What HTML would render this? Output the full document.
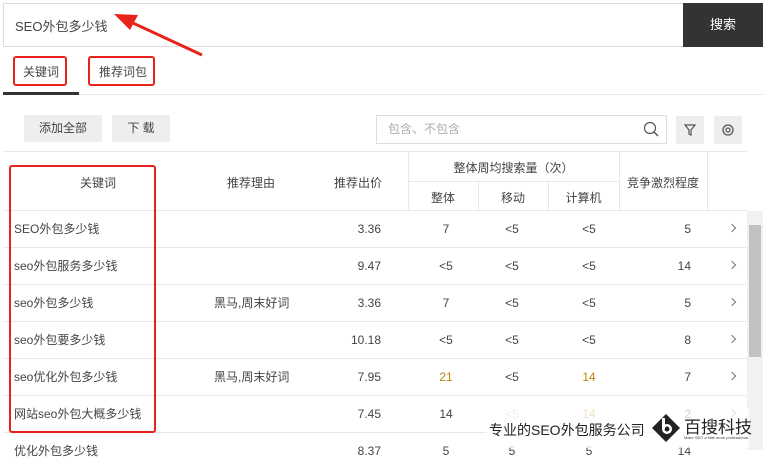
<!DOCTYPE html>
<html><head><meta charset="utf-8"><style>
*{margin:0;padding:0;box-sizing:border-box}
body{width:764px;height:450px;overflow:hidden;background:#fff;font-family:"Liberation Sans","Noto Sans CJK SC",sans-serif;font-size:12px;color:#444;position:relative}
.a{position:absolute}
.red{position:absolute;border:2px solid #e8231b;border-radius:3px}
.btn{position:absolute;background:#eee;text-align:center;line-height:27px;font-size:12px}
.hl{position:absolute;left:3px;width:744px;height:1px;background:#e8e8e8}
.vl{position:absolute;width:1px;background:#e8e8e8}
.row{position:absolute;left:0;width:747px;height:37px;line-height:37px}
.row span{position:absolute;top:0}
.row i{position:absolute;left:729px;top:14px;width:6px;height:6px;border-top:1px solid #777;border-right:1px solid #777;transform:rotate(45deg)}
.c{text-align:center}
.o{color:#b8860b}
</style></head><body>
<div class="a" style="left:3px;top:3px;width:681px;height:44px;border:1px solid #ddd"></div>
<div class="a" style="left:15px;top:16px;font-size:13px">SEO外包多少钱</div>
<div class="a" style="left:683px;top:3px;width:80px;height:44px;background:#333;color:#fff;text-align:center;line-height:44px;font-size:13px">搜索</div>
<svg class="a" style="left:110px;top:10px" width="95" height="50"><line x1="10" y1="7" x2="92" y2="45" stroke="#e8231b" stroke-width="3"/><polygon points="4,4 28,5 20,20" fill="#e8231b"/></svg>
<div class="a" style="left:23px;top:63px;font-size:12px">关键词</div>
<div class="a" style="left:99px;top:63px;font-size:12px">推荐词包</div>
<div class="red" style="left:13px;top:56px;width:54px;height:30px"></div>
<div class="red" style="left:88px;top:56px;width:67px;height:30px"></div>
<div class="a" style="left:3px;top:94px;width:760px;height:1px;background:#e6e6e6"></div>
<div class="a" style="left:3px;top:92px;width:76px;height:3px;background:#333"></div>
<div class="btn" style="left:24px;top:115px;width:78px">添加全部</div>
<div class="btn" style="left:112px;top:115px;width:58px">下 载</div>
<div class="a" style="left:376px;top:115px;width:291px;height:29px;border:1px solid #ddd;color:#aaa;line-height:27px;padding-left:11px">包含、不包含</div>
<svg class="a" style="left:643px;top:121px" width="16" height="16"><circle cx="7" cy="7" r="5.5" fill="none" stroke="#555" stroke-width="1.2"/><line x1="11" y1="11" x2="15" y2="15" stroke="#555" stroke-width="1.4"/></svg>
<div class="a" style="left:676px;top:116px;width:28px;height:28px;background:#eee"></div>
<svg class="a" style="left:684px;top:123px" width="12" height="13"><path d="M1 2H11L7 7V12L5 11V7Z" fill="none" stroke="#555" stroke-width="1.2"/></svg>
<div class="a" style="left:714px;top:116px;width:28px;height:28px;background:#eee"></div>
<svg class="a" style="left:721px;top:123px" width="14" height="14"><circle cx="7" cy="7" r="5" fill="none" stroke="#555" stroke-width="1.3"/><circle cx="7" cy="7" r="2" fill="none" stroke="#555" stroke-width="1.2"/></svg>
<div class="hl" style="top:151px"></div>
<div class="a" style="left:408px;top:181px;width:211px;height:1px;background:#e8e8e8"></div>
<div class="hl" style="top:210px"></div>
<div class="vl" style="left:408px;top:151px;height:60px"></div>
<div class="vl" style="left:478px;top:181px;height:30px"></div>
<div class="vl" style="left:548px;top:181px;height:30px"></div>
<div class="vl" style="left:619px;top:151px;height:60px"></div>
<div class="vl" style="left:707px;top:151px;height:60px"></div>
<div class="a" style="left:80px;top:174px">关键词</div>
<div class="a" style="left:227px;top:174px">推荐理由</div>
<div class="a" style="left:334px;top:174px">推荐出价</div>
<div class="a c" style="left:408px;top:159px;width:211px">整体周均搜索量（次）</div>
<div class="a c" style="left:408px;top:189px;width:70px">整体</div>
<div class="a c" style="left:478px;top:189px;width:70px">移动</div>
<div class="a c" style="left:548px;top:189px;width:71px">计算机</div>
<div class="a c" style="left:619px;top:174px;width:88px">竞争激烈程度</div>
<div class="a" style="left:747px;top:211px;width:16px;height:239px;background:#f1f1f1"></div>
<div class="a" style="left:749px;top:225px;width:12px;height:132px;background:#c1c1c1"></div>
<div class="row" style="top:211px"><span style="left:14px">SEO外包多少钱</span><span style="right:366px">3.36</span><span class="c" style="left:408px;width:76px">7</span><span class="c" style="left:478px;width:68px">&lt;5</span><span class="c" style="left:548px;width:82px">&lt;5</span><span style="right:56px">5</span><i></i></div>
<div class="hl" style="top:247px"></div>
<div class="row" style="top:248px"><span style="left:14px">seo外包服务多少钱</span><span style="right:366px">9.47</span><span class="c" style="left:408px;width:76px">&lt;5</span><span class="c" style="left:478px;width:68px">&lt;5</span><span class="c" style="left:548px;width:82px">&lt;5</span><span style="right:56px">14</span><i></i></div>
<div class="hl" style="top:284px"></div>
<div class="row" style="top:285px"><span style="left:14px">seo外包多少钱</span><span style="left:214px">黑马,周末好词</span><span style="right:366px">3.36</span><span class="c" style="left:408px;width:76px">7</span><span class="c" style="left:478px;width:68px">&lt;5</span><span class="c" style="left:548px;width:82px">&lt;5</span><span style="right:56px">5</span><i></i></div>
<div class="hl" style="top:321px"></div>
<div class="row" style="top:322px"><span style="left:14px">seo外包要多少钱</span><span style="right:366px">10.18</span><span class="c" style="left:408px;width:76px">&lt;5</span><span class="c" style="left:478px;width:68px">&lt;5</span><span class="c" style="left:548px;width:82px">&lt;5</span><span style="right:56px">8</span><i></i></div>
<div class="hl" style="top:358px"></div>
<div class="row" style="top:359px"><span style="left:14px">seo优化外包多少钱</span><span style="left:214px">黑马,周末好词</span><span style="right:366px">7.95</span><span class="c o" style="left:408px;width:76px">21</span><span class="c" style="left:478px;width:68px">&lt;5</span><span class="c o" style="left:548px;width:82px">14</span><span style="right:56px">7</span><i></i></div>
<div class="hl" style="top:395px"></div>
<div class="row" style="top:396px"><span style="left:14px">网站seo外包大概多少钱</span><span style="right:366px">7.45</span><span class="c" style="left:408px;width:76px">14</span><span class="c" style="left:478px;width:68px;color:#bbb">&lt;5</span><span class="c o" style="left:548px;width:82px">14</span><span style="right:56px">2</span><i></i></div>
<div class="hl" style="top:432px"></div>
<div class="row" style="top:433px"><span style="left:14px">优化外包多少钱</span><span style="right:366px">8.37</span><span class="c" style="left:408px;width:76px">5</span><span class="c" style="left:478px;width:68px">5</span><span class="c" style="left:548px;width:82px">5</span><span style="right:56px">14</span></div>
<div class="red" style="left:9px;top:165px;width:147px;height:268px"></div>
<div class="a" style="left:485px;top:408px;width:264px;height:40px;background:rgba(255,255,255,0.75)"></div>
<div class="a" style="left:489px;top:420px;font-size:14px;color:#222">专业的SEO外包服务公司</div>
<svg class="a" style="left:651px;top:413px" width="30" height="30"><polygon points="15,1 29,15 15,29 1,15" fill="#222"/><circle cx="16" cy="16" r="5" fill="#fff"/><circle cx="16" cy="16" r="2.5" fill="#222"/><rect x="11" y="5" width="3" height="11" fill="#fff"/></svg>
<div class="a" style="left:684px;top:413px;font-size:17px;color:#222">百搜科技</div>
<div class="a" style="left:684px;top:435px;font-size:4px;color:#444">Make SEO a little more professional</div>
</body></html>
